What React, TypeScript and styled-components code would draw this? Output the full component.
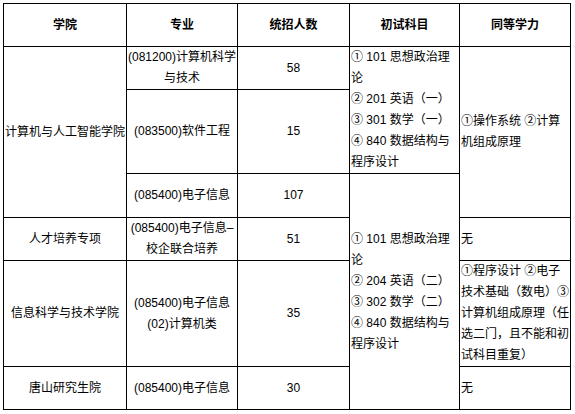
import React from "react";
import styled, { createGlobalStyle } from "styled-components";

const Global = createGlobalStyle`
  html, body { margin: 0; padding: 0; background: #fff; }
  body { font-family: "Liberation Sans", "Noto Sans CJK SC", sans-serif; color: #000; }
`;

const Page = styled.div`
  padding: 3px 0 0 3px;
`;

const Table = styled.table`
  border-collapse: collapse;
  table-layout: fixed;
  width: 567px;
  font-size: 12px;
  line-height: 21px;
`;

const Row = styled.tr<{ $h: number }>`
  height: ${(p) => p.$h}px;
`;

const Head = styled.th`
  border: 1px solid #000;
  font-weight: bold;
  text-align: center;
  vertical-align: middle;
  padding: 0;
`;

const Cell = styled.td<{ $align?: "left" | "center" }>`
  border: 1px solid #000;
  padding: 0 ${(p) => (p.$align === "left" ? "0 0 1px" : "0")};
  text-align: ${(p) => p.$align ?? "center"};
  vertical-align: middle;
  word-break: break-all;
`;

const exam1 = (
  <>
    ① 101 思想政治理论
    <br />② 201 英语（一）
    <br />③ 301 数学（一）
    <br />④ 840 数据结构与程序设计
  </>
);

const exam2 = (
  <>
    ① 101 思想政治理论
    <br />② 204 英语（二）
    <br />③ 302 数学（二）
    <br />④ 840 数据结构与程序设计
  </>
);

export default function App() {
  return (
    <Page>
      <Global />
      <Table>
        <colgroup>
          <col style={{ width: 123 }} />
          <col style={{ width: 111 }} />
          <col style={{ width: 112 }} />
          <col style={{ width: 110 }} />
          <col style={{ width: 111 }} />
        </colgroup>
        <thead>
          <Row $h={43}>
            <Head>学院</Head>
            <Head>专业</Head>
            <Head>统招人数</Head>
            <Head>初试科目</Head>
            <Head>同等学力</Head>
          </Row>
        </thead>
        <tbody>
          <Row $h={43}>
            <Cell rowSpan={3}>计算机与人工智能学院</Cell>
            <Cell>(081200)计算机科学与技术</Cell>
            <Cell>58</Cell>
            <Cell rowSpan={2} $align="left">
              {exam1}
            </Cell>
            <Cell rowSpan={3} $align="left">
              ①操作系统 ②计算机组成原理
            </Cell>
          </Row>
          <Row $h={83}>
            <Cell>(083500)软件工程</Cell>
            <Cell>15</Cell>
          </Row>
          <Row $h={44}>
            <Cell>(085400)电子信息</Cell>
            <Cell>107</Cell>
            <Cell rowSpan={4} $align="left">
              {exam2}
            </Cell>
          </Row>
          <Row $h={43}>
            <Cell>人才培养专项</Cell>
            <Cell>(085400)电子信息–校企联合培养</Cell>
            <Cell>51</Cell>
            <Cell $align="left">无</Cell>
          </Row>
          <Row $h={105}>
            <Cell>信息科学与技术学院</Cell>
            <Cell>
              (085400)电子信息
              <br />
              (02)计算机类
            </Cell>
            <Cell>35</Cell>
            <Cell $align="left">
              ①程序设计 ②电子技术基础（数电）③计算机组成原理（任选二门，且不能和初试科目重复）
            </Cell>
          </Row>
          <Row $h={43}>
            <Cell>唐山研究生院</Cell>
            <Cell>(085400)电子信息</Cell>
            <Cell>30</Cell>
            <Cell $align="left">无</Cell>
          </Row>
        </tbody>
      </Table>
    </Page>
  );
}
